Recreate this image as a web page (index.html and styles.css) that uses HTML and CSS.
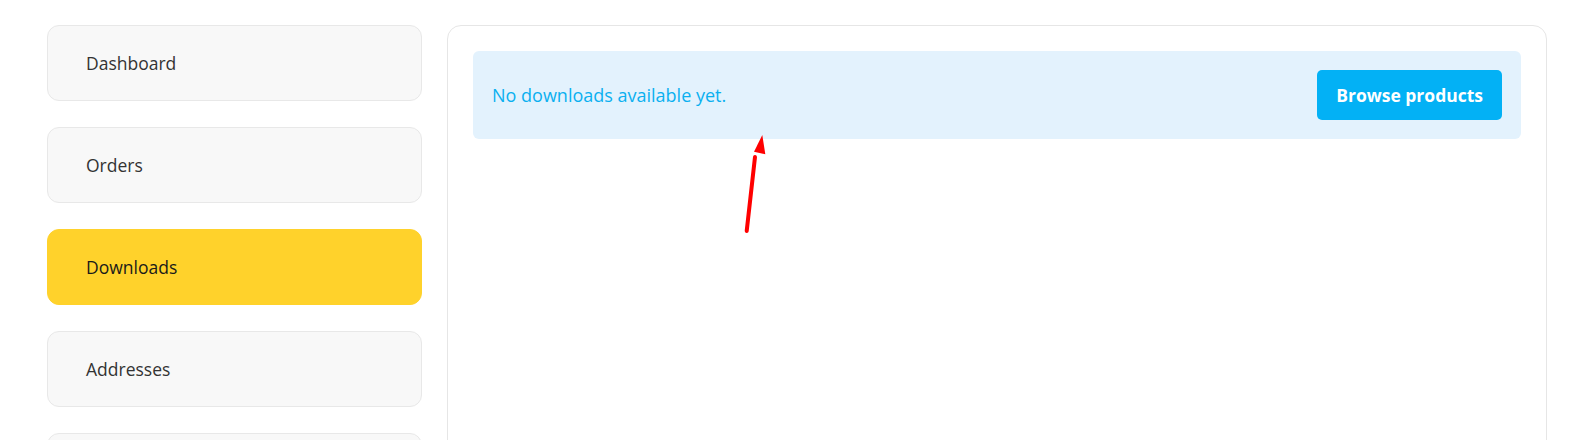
FILE: index.html
```html
<!DOCTYPE html>
<html>
<head>
    <meta name="viewport" content="width=device-width, initial-scale=1.0">
    <title>My account - Downloads</title>
    <link rel="stylesheet" href="styles.css">
</head>
<body>
    <div class="account">
        <nav class="account-nav">
            <a class="nav-item" href="#">Dashboard</a>
            <a class="nav-item" href="#">Orders</a>
            <a class="nav-item active" href="#">Downloads</a>
            <a class="nav-item" href="#">Addresses</a>
            <a class="nav-item" href="#">Account details</a>
        </nav>
        <main class="account-content">
            <div class="notice">
                <span class="notice-text">No downloads available yet.</span>
                <a class="button" href="#">Browse products</a>
            </div>
        </main>
    </div>

    <!-- annotation arrow -->
    <svg class="arrow" width="40" height="110" viewBox="0 0 40 110">
        <line x1="18.7" y1="104" x2="27" y2="30" stroke="#ff0000" stroke-width="4" stroke-linecap="round"/>
        <polygon points="34.3,8 26,24.7 37.3,27.3" fill="#ff0000"/>
    </svg>
</body>
</html>
```

FILE: styles.css
```css
body {
    margin: 0;
    font-family: "Open Sans", "Noto Sans", sans-serif;
    background: #fff;
    overflow: hidden;
}
.account {
    display: flex;
    gap: 25px;
    padding: 25px 0 0 47px;
}
.account-nav {
    width: 375px;
    flex-shrink: 0;
    display: flex;
    flex-direction: column;
    gap: 26px;
}
.nav-item {
    display: flex;
    align-items: center;
    height: 76px;
    box-sizing: border-box;
    padding: 0 38px;
    background-color: #f8f8f8;
    border: 1px solid #e8e8e8;
    border-radius: 12px;
    color: #333;
    font-size: 17.5px;
    text-decoration: none;
}
.nav-item.active {
    background-color: #ffd22b;
    border-color: #ffd22b;
    color: #1a1a1a;
}
.account-content {
    width: 1100px;
    height: 480px;
    box-sizing: border-box;
    padding: 25px;
    border: 1px solid #e6e6e6;
    border-radius: 14px;
}
.notice {
    display: flex;
    align-items: center;
    justify-content: space-between;
    padding: 19px;
    background-color: #e3f2fd;
    border-radius: 6px;
}
.notice-text {
    color: #0ab0f0;
    font-size: 18px;
}
.button {
    display: inline-block;
    padding: 13px 19px;
    background-color: #03b1f5;
    color: #fff;
    font-weight: 700;
    font-size: 17.5px;
    border-radius: 5px;
    text-decoration: none;
}
.arrow {
    position: absolute;
    left: 728px;
    top: 127px;
}
```
